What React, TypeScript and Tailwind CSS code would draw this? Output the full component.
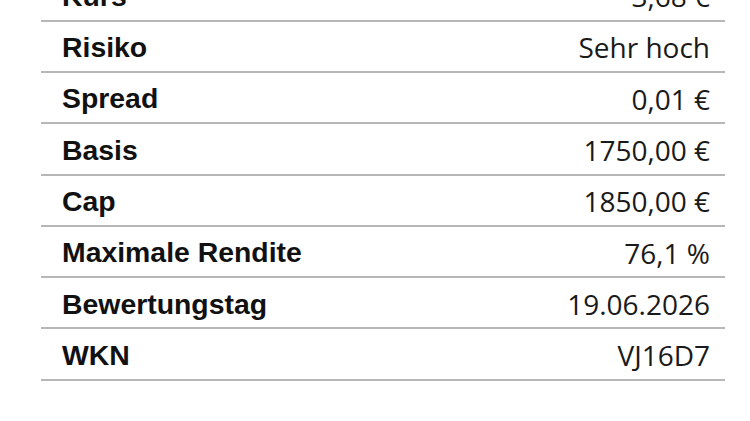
const rows: [string, string][] = [
  ["Kurs", "3,68 €"],
  ["Risiko", "Sehr hoch"],
  ["Spread", "0,01 €"],
  ["Basis", "1750,00 €"],
  ["Cap", "1850,00 €"],
  ["Maximale Rendite", "76,1 %"],
  ["Bewertungstag", "19.06.2026"],
  ["WKN", "VJ16D7"],
]

export default function App() {
  return (
    <div className="w-[750px] h-[421px] overflow-hidden bg-white">
      {/* details table, first row scrolled off the top */}
      <div className="ml-[41px] mt-[-29.6px] w-[684px]">
        {rows.map(([label, value]) => (
          <div
            key={label}
            className="flex h-[51.3px] items-center justify-between border-b-2 border-[#b7b7b7] pl-[21px] pr-[15px] pt-[2px] leading-none text-[#111]"
          >
            <span className="text-[28.4px] font-bold font-['Liberation_Sans',sans-serif]">{label}</span>
            <span className="text-[28px] font-normal font-['Open_Sans',sans-serif] text-[#1a1a1a]">{value}</span>
          </div>
        ))}
      </div>
    </div>
  )
}
